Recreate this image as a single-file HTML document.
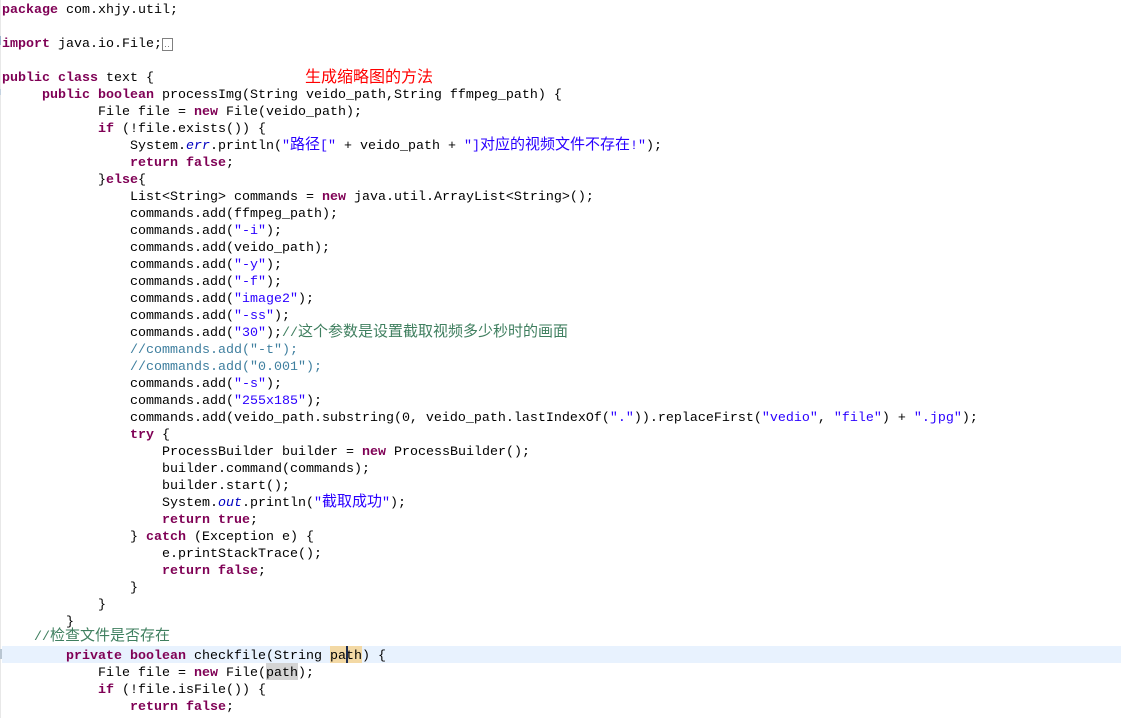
<!DOCTYPE html>
<html><head><meta charset="utf-8">
<style>
html,body{margin:0;padding:0;background:#fff;width:1121px;height:718px;overflow:hidden}
#w{position:relative;width:1121px;height:718px;overflow:hidden;font-family:"Liberation Mono",monospace;font-size:13.33px;color:#000}
.l{position:absolute;white-space:pre;line-height:17px;height:17px;margin-top:2px}
.k{color:#7f0055;font-weight:bold}
.s{color:#2a00ff}
.f{color:#0000c0;font-style:italic}
.c{color:#3f7f5f}
.d{color:#3f7f9f}
.z{font-family:"Noto Sans CJK SC","WenQuanYi Zen Hei",sans-serif;font-size:15px;line-height:0}
</style></head><body><div id="w">
<div style="position:absolute;left:0;top:0;width:1px;height:718px;background:#e8e8e8"></div>
<div style="position:absolute;left:0;top:36px;width:1px;height:9px;background:#9db4cc"></div>
<div style="position:absolute;left:0;top:89px;width:1px;height:6px;background:#c4d2e0"></div>
<div style="position:absolute;left:2px;top:646px;width:1119px;height:17px;background:#e8f2fe"></div>
<div style="position:absolute;left:0;top:649px;width:2px;height:10px;background:#b9c6d2"></div>
<div style="position:absolute;left:330px;top:646px;width:32px;height:17px;background:#f3d9a5"></div>
<div style="position:absolute;left:266px;top:663px;width:32px;height:17px;background:#d4d4d4"></div>
<div style="position:absolute;left:162px;top:38px;width:9px;height:11px;border:1px solid #808080"></div>
<div style="position:absolute;left:165px;top:46px;width:1px;height:1px;background:#808080"></div>
<div style="position:absolute;left:168px;top:46px;width:1px;height:1px;background:#808080"></div>
<div class="l" style="left:2px;top:0"><span class="k">package</span> com.xhjy.util;</div>
<div class="l" style="left:2px;top:34px"><span class="k">import</span> java.io.File;</div>
<div class="l" style="left:2px;top:68px"><span class="k">public</span> <span class="k">class</span> text {</div>
<div class="l" style="left:305px;top:63px;color:#f00;font-family:'Noto Sans CJK SC',sans-serif;font-size:16px;line-height:20px;height:20px">生成缩略图的方法</div>
<div class="l" style="left:42px;top:85px"><span class="k">public</span> <span class="k">boolean</span> processImg(String veido_path,String ffmpeg_path) {</div>
<div class="l" style="left:98px;top:102px">File file = <span class="k">new</span> File(veido_path);</div>
<div class="l" style="left:98px;top:119px"><span class="k">if</span> (!file.exists()) {</div>
<div class="l" style="left:130px;top:136px">System.<span class="f">err</span>.println(<span class="s">"<span class="z">路径</span>[" </span>+ veido_path + <span class="s">"]<span class="z">对应的视频文件不存在</span>!"</span>);</div>
<div class="l" style="left:130px;top:153px"><span class="k">return</span> <span class="k">false</span>;</div>
<div class="l" style="left:98px;top:170px">}<span class="k">else</span>{</div>
<div class="l" style="left:130px;top:187px">List&lt;String&gt; commands = <span class="k">new</span> java.util.ArrayList&lt;String&gt;();</div>
<div class="l" style="left:130px;top:204px">commands.add(ffmpeg_path);</div>
<div class="l" style="left:130px;top:221px">commands.add(<span class="s">"-i"</span>);</div>
<div class="l" style="left:130px;top:238px">commands.add(veido_path);</div>
<div class="l" style="left:130px;top:255px">commands.add(<span class="s">"-y"</span>);</div>
<div class="l" style="left:130px;top:272px">commands.add(<span class="s">"-f"</span>);</div>
<div class="l" style="left:130px;top:289px">commands.add(<span class="s">"image2"</span>);</div>
<div class="l" style="left:130px;top:306px">commands.add(<span class="s">"-ss"</span>);</div>
<div class="l" style="left:130px;top:323px">commands.add(<span class="s">"30"</span>);<span class="c">//<span class="z">这个参数是设置截取视频多少秒时的画面</span></span></div>
<div class="l d" style="left:130px;top:340px">//commands.add("-t");</div>
<div class="l d" style="left:130px;top:357px">//commands.add("0.001");</div>
<div class="l" style="left:130px;top:374px">commands.add(<span class="s">"-s"</span>);</div>
<div class="l" style="left:130px;top:391px">commands.add(<span class="s">"255x185"</span>);</div>
<div class="l" style="left:130px;top:408px">commands.add(veido_path.substring(0, veido_path.lastIndexOf(<span class="s">"."</span>)).replaceFirst(<span class="s">"vedio"</span>, <span class="s">"file"</span>) + <span class="s">".jpg"</span>);</div>
<div class="l" style="left:130px;top:425px"><span class="k">try</span> {</div>
<div class="l" style="left:162px;top:442px">ProcessBuilder builder = <span class="k">new</span> ProcessBuilder();</div>
<div class="l" style="left:162px;top:459px">builder.command(commands);</div>
<div class="l" style="left:162px;top:476px">builder.start();</div>
<div class="l" style="left:162px;top:493px">System.<span class="f">out</span>.println(<span class="s">"<span class="z">截取成功</span>"</span>);</div>
<div class="l" style="left:162px;top:510px"><span class="k">return</span> <span class="k">true</span>;</div>
<div class="l" style="left:130px;top:527px">} <span class="k">catch</span> (Exception e) {</div>
<div class="l" style="left:162px;top:544px">e.printStackTrace();</div>
<div class="l" style="left:162px;top:561px"><span class="k">return</span> <span class="k">false</span>;</div>
<div class="l" style="left:130px;top:578px">}</div>
<div class="l" style="left:98px;top:595px">}</div>
<div class="l" style="left:66px;top:612px">}</div>
<div class="l c" style="left:34px;top:627px">//<span class="z">检查文件是否存在</span></div>
<div class="l" style="left:66px;top:646px"><span class="k">private</span> <span class="k">boolean</span> checkfile(String path) {</div>
<div style="position:absolute;left:346px;top:646px;width:2px;height:17px;background:#1a2a50"></div>
<div class="l" style="left:98px;top:663px">File file = <span class="k">new</span> File(path);</div>
<div class="l" style="left:98px;top:680px"><span class="k">if</span> (!file.isFile()) {</div>
<div class="l" style="left:130px;top:697px"><span class="k">return</span> <span class="k">false</span>;</div>
</div></body></html>
